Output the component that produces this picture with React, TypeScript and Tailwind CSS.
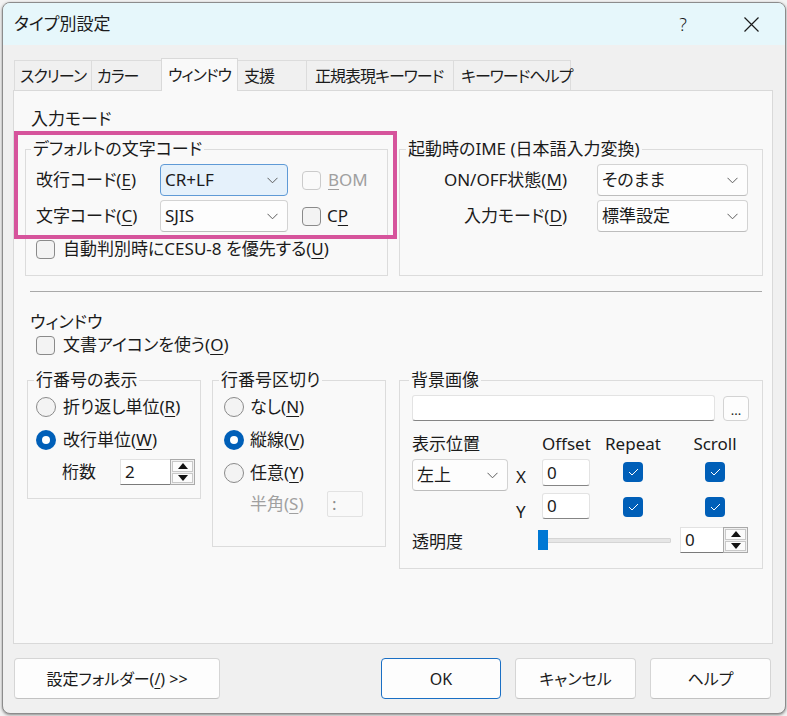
import React from 'react';

function U({ children }: { children: React.ReactNode }) {
  return <span className="underline underline-offset-[3px] decoration-1">{children}</span>;
}

function Chevron() {
  return (
    <svg width="11" height="7" viewBox="0 0 11 7">
      <path d="M0.5 0.8 L5.5 5.8 L10.5 0.8" fill="none" stroke="#5c5c5c" strokeWidth="1" />
    </svg>
  );
}

function Combo({ text, className, focus }: { text: string; className: string; focus?: boolean }) {
  return (
    <div
      className={`flex items-center justify-between pl-[4px] pr-[9px] rounded-[4px] border ${
        focus ? 'bg-[#e5f1fb] border-[#5f9ad6]' : 'bg-[#fdfdfd] border-[#d3d3d3] border-b-[#bdbdbd]'
      } ${className}`}
    >
      <span>{text}</span>
      <Chevron />
    </div>
  );
}

function Check({ checked, disabled }: { checked?: boolean; disabled?: boolean }) {
  if (checked) {
    return (
      <span className="w-[20px] h-[20px] shrink-0 rounded-[4px] bg-[#005fb8] flex items-center justify-center">
        <svg width="11" height="8" viewBox="0 0 11 8">
          <path d="M1 4 L4 7 L10 1" fill="none" stroke="white" strokeWidth="1" />
        </svg>
      </span>
    );
  }
  return (
    <span
      className={`block w-[19px] h-[19px] shrink-0 rounded-[4px] border ${
        disabled ? 'border-[#cbcbcb] bg-[#fafafa]' : 'border-[#8a8a8a] bg-[#f3f3f3]'
      }`}
    />
  );
}

function Radio({ checked }: { checked?: boolean }) {
  if (checked) {
    return (
      <span className="w-[20px] h-[20px] shrink-0 rounded-full bg-[#005fb8] flex items-center justify-center">
        <span className="block w-[8px] h-[8px] rounded-full bg-white" />
      </span>
    );
  }
  return <span className="block w-[20px] h-[20px] shrink-0 rounded-full border border-[#8a8a8a] bg-[#f3f3f3]" />;
}

function Arrow({ up }: { up?: boolean }) {
  return (
    <svg width="10" height="6" viewBox="0 0 10 6">
      <path d={up ? 'M0 6 L5 0 L10 6 Z' : 'M0 0 L10 0 L5 6 Z'} fill="#111" />
    </svg>
  );
}

function Spin({ value, inputW }: { value: string; inputW: string }) {
  return (
    <div className="flex h-[26px]">
      <div className={`${inputW} bg-white border-t border-l border-[#e2e2e2] border-b border-b-[#7a7a7a] flex items-center pl-[4px]`}>
        {value}
      </div>
      <div className="w-[25px] flex flex-col gap-[1px] border border-[#a9a9a9] bg-[#f0f0f0] p-[1px]">
        <div className="flex-1 bg-[#fbfbfb] border border-[#c8c8c8] flex items-center justify-center">
          <Arrow up />
        </div>
        <div className="flex-1 bg-[#fbfbfb] border border-[#c8c8c8] flex items-center justify-center">
          <Arrow />
        </div>
      </div>
    </div>
  );
}

function TextBox({ value, className }: { value?: string; className: string }) {
  return (
    <div className={`bg-white border border-[#e3e3e3] border-b-[#858585] rounded-[3px] flex items-center pl-[4px] ${className}`}>
      {value}
    </div>
  );
}

function Group({
  title,
  className,
  legendMl,
  children,
}: {
  title: string;
  className: string;
  legendMl: string;
  children: React.ReactNode;
}) {
  return (
    <fieldset className={`border border-[#dcdcdc] shrink-0 ${className}`}>
      <legend className={`${legendMl} px-[2px] leading-[20px] whitespace-nowrap`}>{title}</legend>
      {children}
    </fieldset>
  );
}

const tabs = [
  { label: 'スクリーン', w: 'w-[78px]', pl: 'pl-[5px]' },
  { label: 'カラー', w: 'w-[71px]', pl: 'pl-[5px]' },
  { label: 'ウィンドウ', w: 'w-[77px]', pl: 'pl-[6px]', active: true },
  { label: '支援', w: 'w-[70px]', pl: 'pl-[6px]' },
  { label: '正規表現キーワード', w: 'w-[148px]', pl: 'pl-[8px]' },
  { label: 'キーワードヘルプ', w: 'w-[118px]', pl: 'pl-[7px]' },
];

export default function App() {
  return (
    <div className="relative w-[787px] h-[716px] bg-[#f3f3f3] p-[2px] font-['Noto_Sans','Noto_Sans_CJK_JP',sans-serif] [font-feature-settings:'palt'] text-[17px] leading-[20px] text-[#1b1b1b] whitespace-nowrap">
      <div className="w-[784px] h-[712px] flex flex-col rounded-[8px] border border-[#8c8c8c] overflow-hidden bg-[#f0f0f0] shadow-[0_1px_3px_rgba(0,0,0,0.45)]">
        {/* Title bar */}
        <div className="h-[42px] shrink-0 bg-[#e6f7fb] flex items-center pl-[11px] pr-[11px]">
          <span className="flex-1">タイプ別設定</span>
          <span className="w-[46px] text-center text-[18px] font-light">?</span>
          <span className="ml-[22px] w-[46px] flex justify-center">
            <svg width="15" height="15" viewBox="0 0 15 15">
              <path d="M0.5 0.5 L14.5 14.5 M14.5 0.5 L0.5 14.5" stroke="#1b1b1b" strokeWidth="1.2" />
            </svg>
          </span>
        </div>

        <div className="flex-1 pl-[10px] pt-[13px]">
          {/* Tabs */}
          <div className="flex items-end h-[32px] pl-[1px] text-[16px] tracking-[-1px]">
            {tabs.map(t => (
              <div
                key={t.label}
                className={`${t.w} ${t.pl} -ml-px first:ml-0 border border-b-0 flex items-center ${
                  t.active
                    ? 'h-[33px] -mb-px relative z-10 bg-[#f9f9f9] border-[#d9d9d9]'
                    : 'h-[30px] bg-[#f0f0f0] border-[#dcdcdc]'
                }`}
              >
                {t.label}
              </div>
            ))}
          </div>

          {/* Panel */}
          <div className="w-[760px] h-[554px] border border-[#d9d9d9] bg-[#f9f9f9] pt-[18px] pl-[11px]">
            <div className="ml-[6px]">入力モード</div>

            <div className="flex gap-[11px] mt-[10px]">
              <Group title="デフォルトの文字コード" className="w-[363px] h-[137px]" legendMl="ml-[5px]">
                <div className="pl-[10px] pt-[5px]">
                  <div className="flex items-center h-[32px]">
                    <span className="w-[124px]">
                      改行コード(<U>E</U>)
                    </span>
                    <Combo text="CR+LF" className="w-[128px] h-[32px]" focus />
                    <span className="ml-[14px]">
                      <Check disabled />
                    </span>
                    <span className="ml-[7px] text-[#a0a0a0]">
                      <U>B</U>OM
                    </span>
                  </div>
                  <div className="flex items-center h-[32px] mt-[4px]">
                    <span className="w-[124px]">
                      文字コード(<U>C</U>)
                    </span>
                    <Combo text="SJIS" className="w-[128px] h-[32px]" />
                    <span className="ml-[14px]">
                      <Check />
                    </span>
                    <span className="ml-[6px]">
                      C<U>P</U>
                    </span>
                  </div>
                  <div className="flex items-center h-[20px] mt-[7px] gap-[8px]">
                    <Check />
                    <span>
                      自動判別時にCESU-8 を優先する(<U>U</U>)
                    </span>
                  </div>
                </div>
              </Group>

              <Group title="起動時のIME (日本語入力変換)" className="w-[364px] h-[137px]" legendMl="ml-[6px]">
                <div className="pt-[5px]">
                  <div className="flex items-center h-[32px]">
                    <span className="w-[167px] text-right">
                      ON/OFF状態(<U>M</U>)
                    </span>
                    <Combo text="そのまま" className="ml-[30px] w-[151px] h-[32px]" />
                  </div>
                  <div className="flex items-center h-[32px] mt-[4px]">
                    <span className="w-[167px] text-right">
                      入力モード(<U>D</U>)
                    </span>
                    <Combo text="標準設定" className="ml-[30px] w-[151px] h-[32px]" />
                  </div>
                </div>
              </Group>
            </div>

            <div className="mt-[15px] ml-[5px] w-[732px] h-px bg-[#a9a9a9]" />

            <div className="mt-[20px] ml-[5px]">ウィンドウ</div>
            <div className="mt-[3px] ml-[11px] flex items-center h-[20px] gap-[8px]">
              <Check />
              <span>
                文書アイコンを使う(<U>O</U>)
              </span>
            </div>

            <div className="flex items-start mt-[15px] ml-[2px]">
              <Group title="行番号の表示" className="w-[174px] h-[129px]" legendMl="ml-[6px]">
                <div className="pl-[8px] pt-[7px]">
                  <div className="flex items-center h-[20px] gap-[7px]">
                    <Radio />
                    <span>
                      折り返し単位(<U>R</U>)
                    </span>
                  </div>
                  <div className="flex items-center h-[20px] gap-[7px] mt-[13px]">
                    <Radio checked />
                    <span>
                      改行単位(<U>W</U>)
                    </span>
                  </div>
                  <div className="flex items-center mt-[9px] pl-[26px]">
                    <span className="w-[58px]">桁数</span>
                    <Spin value="2" inputW="w-[50px]" />
                  </div>
                </div>
              </Group>

              <Group title="行番号区切り" className="ml-[11px] w-[174px] h-[177px]" legendMl="ml-[6px]">
                <div className="pl-[11px] pt-[7px]">
                  <div className="flex items-center h-[20px] gap-[6px]">
                    <Radio />
                    <span>
                      なし(<U>N</U>)
                    </span>
                  </div>
                  <div className="flex items-center h-[20px] gap-[6px] mt-[13px]">
                    <Radio checked />
                    <span>
                      縦線(<U>V</U>)
                    </span>
                  </div>
                  <div className="flex items-center h-[20px] gap-[6px] mt-[13px]">
                    <Radio />
                    <span>
                      任意(<U>Y</U>)
                    </span>
                  </div>
                  <div className="flex items-center mt-[8px] pl-[26px] h-[26px]">
                    <span className="w-[77px] text-[#a0a0a0]">
                      半角(<U>S</U>)
                    </span>
                    <div className="w-[36px] h-[26px] bg-[#f9f9f9] border border-[#e2e2e2] rounded-[2px] pl-[4px] text-[#8a8a8a] flex items-center">
                      :
                    </div>
                  </div>
                </div>
              </Group>

              <Group title="背景画像" className="ml-[13px] w-[364px] h-[199px]" legendMl="ml-[9px]">
                <div className="pl-[12px] pt-[5px]">
                  <div className="flex items-center">
                    <TextBox className="w-[303px] h-[26px]" />
                    <div className="ml-[8px] w-[26px] h-[25px] bg-[#fdfdfd] border border-[#d3d3d3] rounded-[4px] flex items-end justify-center pb-[3px] text-[13px] leading-[13px]">
                      ...
                    </div>
                  </div>

                  <div className="flex h-[20px] mt-[13px]">
                    <span className="w-[130px]">表示位置</span>
                    <span className="w-[48px] text-center">Offset</span>
                    <span className="w-[86px] text-center">Repeat</span>
                    <span className="w-[78px] text-center">Scroll</span>
                  </div>

                  <div className="flex items-start h-[32px] mt-[5px]">
                    <Combo text="左上" className="w-[96px] h-[32px]" />
                    <span className="w-[34px] pl-[8px] mt-[8px]">X</span>
                    <TextBox value="0" className="w-[48px] h-[27px]" />
                    <div className="w-[86px] flex justify-center mt-[3px]">
                      <Check checked />
                    </div>
                    <div className="w-[78px] flex justify-center mt-[3px]">
                      <Check checked />
                    </div>
                  </div>

                  <div className="flex items-start h-[26px] mt-[2px]">
                    <span className="w-[96px]" />
                    <span className="w-[34px] pl-[8px] mt-[9px]">Y</span>
                    <TextBox value="0" className="w-[48px] h-[26px]" />
                    <div className="w-[86px] flex justify-center mt-[4px]">
                      <Check checked />
                    </div>
                    <div className="w-[78px] flex justify-center mt-[4px]">
                      <Check checked />
                    </div>
                  </div>

                  <div className="flex items-center h-[26px] mt-[8px]">
                    <span className="w-[126px] mt-[4px]">透明度</span>
                    <div className="relative w-[133px] h-[20px] flex items-center">
                      <div className="w-full h-[5px] bg-[#e6e6e6] border border-[#d5d5d5] rounded-[1px]" />
                      <div className="absolute left-0 top-0 w-[10px] h-[20px] bg-[#0078d4]" />
                    </div>
                    <div className="ml-[9px]">
                      <Spin value="0" inputW="w-[43px]" />
                    </div>
                  </div>
                </div>
              </Group>
            </div>
          </div>

          {/* Buttons */}
          <div className="flex mt-[14px] h-[41px] pl-[1px] text-[16px]">
            <div className="w-[206px] h-[41px] bg-[#fdfdfd] border border-[#d5d5d5] border-b-[#c2c2c2] rounded-[4px] flex items-center justify-center">
              設定フォルダー(<U>/</U>) &gt;&gt;
            </div>
            <div className="ml-[161px] w-[120px] h-[41px] bg-[#fdfdfd] border border-[#1a6fc4] rounded-[4px] flex items-center justify-center">
              OK
            </div>
            <div className="ml-[14px] w-[121px] h-[41px] bg-[#fdfdfd] border border-[#d5d5d5] border-b-[#c2c2c2] rounded-[4px] flex items-center justify-center">
              キャンセル
            </div>
            <div className="ml-[14px] w-[121px] h-[41px] bg-[#fdfdfd] border border-[#d5d5d5] border-b-[#c2c2c2] rounded-[4px] flex items-center justify-center">
              ヘルプ
            </div>
          </div>
        </div>
      </div>

      {/* annotation highlight */}
      <div className="absolute left-[14px] top-[131px] w-[383px] h-[108px] border-[4px] border-[#d6549c] pointer-events-none" />
    </div>
  );
}
